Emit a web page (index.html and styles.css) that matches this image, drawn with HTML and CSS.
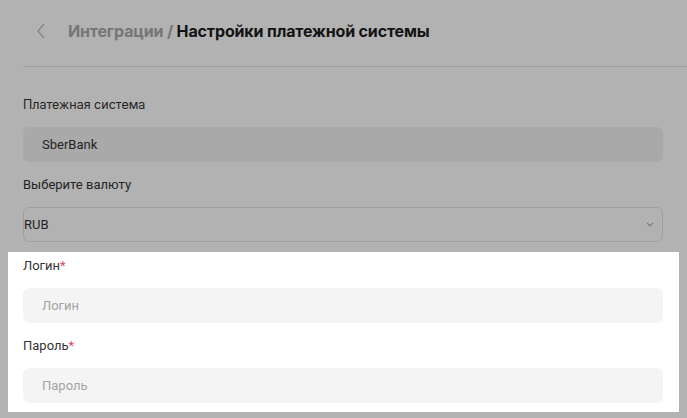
FILE: index.html
```html
<!DOCTYPE html>
<html>
<head>
    <title>Настройки платежной системы</title>
    <link rel="stylesheet" href="styles.css">
</head>
<body>
    <div class="page">
        <div class="page-header">
            <button class="back-button">
                <svg width="8" height="16" viewBox="0 0 8 16"><path d="M7 1 L1 8 L7 15" fill="none" stroke="#bdbdbd" stroke-width="1.2"/></svg>
            </button>
            <h1 class="page-title"><span class="crumb">Интеграции /</span> Настройки платежной системы</h1>
        </div>

        <div class="form">
            <div class="field">
                <label class="field-label first">Платежная система</label>
                <div class="input readonly">SberBank</div>
            </div>
            <div class="field">
                <label class="field-label">Выберите валюту</label>
                <div class="select">
                    <span>RUB</span>
                    <svg width="8" height="5" viewBox="0 0 8 5"><path d="M1 1 L4 4 L7 1" fill="none" stroke="#b0b0b0" stroke-width="1.2"/></svg>
                </div>
            </div>
            <!-- highlighted block of the onboarding tour -->
            <div class="tour-focus">
                <div class="field">
                    <label class="field-label">Логин<span class="req">*</span></label>
                    <div class="input placeholder">Логин</div>
                </div>
                <div class="field last">
                    <label class="field-label">Пароль<span class="req">*</span></label>
                    <div class="input placeholder">Пароль</div>
                </div>
            </div>
        </div>
    </div>
</body>
</html>
```

FILE: styles.css
```css
html, body {
    height: 100%;
}

body {
    margin: 0;
    background-color: #fff;
    font-family: Roboto, "Liberation Sans", sans-serif;
    color: #333;
    overflow: hidden;
}

.page {
    padding: 0 24px 15px 23px;
}

.page-header {
    display: flex;
    align-items: flex-start;
    height: 67px;
    box-sizing: border-box;
    padding-top: 20px;
    margin-right: -24px;
    border-bottom: 1px solid #e2e2e2;
}

.back-button {
    border: none;
    background: none;
    padding: 0;
    margin: 3px 0 0 14px;
    width: 8px;
    height: 16px;
    display: flex;
}

.page-title {
    margin: 0 0 0 23px;
    font-family: Inter, "Noto Sans", sans-serif;
    font-size: 16px;
    line-height: 22px;
    font-weight: 700;
    color: #1c1c1c;
    letter-spacing: -0.15px;
}

.crumb {
    color: #a9a9a9;
}

.form {
    padding-top: 30px;
}

.field {
    display: flex;
    flex-direction: column;
    margin-bottom: 15px;
}

.field.last {
    margin-bottom: 0;
}

.field-label {
    font-size: 13px;
    line-height: 16px;
    color: #333;
    margin-bottom: 14px;
}

.field-label.first {
    font-family: Inter, "Noto Sans", sans-serif;
    font-size: 12.5px;
}

.req {
    color: #e0475a;
}

.input {
    height: 35px;
    box-sizing: border-box;
    background-color: #f4f4f4;
    border-radius: 6px;
    padding: 0 19px;
    display: flex;
    align-items: center;
    font-size: 13px;
    color: #333;
}

.input.readonly {
    background-color: #f2f2f2;
}

.input.placeholder {
    color: #a3a3a3;
}

.select {
    height: 35px;
    box-sizing: border-box;
    border: 1px solid #e6e6e6;
    border-radius: 6px;
    padding: 0 8px 0 0;
    display: flex;
    align-items: center;
    justify-content: space-between;
    font-size: 13px;
    color: #333;
}

.tour-focus {
    position: relative;
    padding-top: 1px;
}

.tour-focus::before {
    content: "";
    position: absolute;
    top: -5px;
    left: -15px;
    right: -16px;
    bottom: -9px;
    box-shadow: 0 0 0 2000px rgba(0, 0, 0, 0.3);
    z-index: 10;
    pointer-events: none;
}
```
